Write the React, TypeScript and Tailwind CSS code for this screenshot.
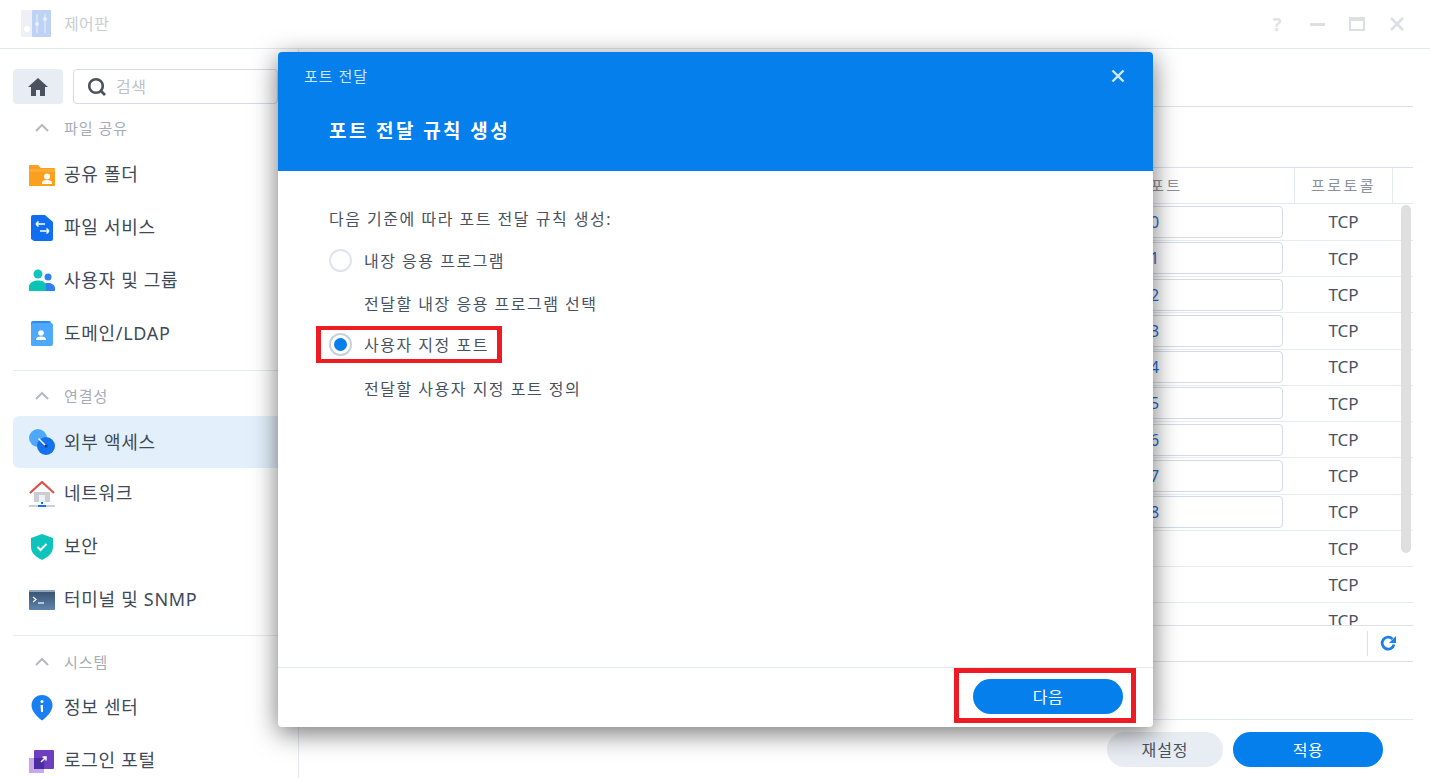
import React from 'react';

const font = "font-['Noto_Sans','Noto_Sans_CJK_KR',sans-serif]";

const FolderIcon = () => (
  <svg width="26" height="24" viewBox="0 0 26 24">
    <path d="M0 3a1 1 0 0 1 1-1h8l3 3h13a1 1 0 0 1 1 1v16a1 1 0 0 1-1 1H1a1 1 0 0 1-1-1z" fill="#fba01e" />
    <path d="M0 6h26v3H0z" fill="#fdb347" opacity="0.6" />
    <circle cx="18" cy="13.5" r="3" fill="#fff" />
    <path d="M13 21v-1.5c0-1.5 2-2.5 5-2.5s5 1 5 2.5V21z" fill="#fff" />
  </svg>
);

const FileIcon = () => (
  <svg width="24" height="26" viewBox="0 0 24 26">
    <path d="M1 2a2 2 0 0 1 2-2h12l8 7v17a2 2 0 0 1-2 2H4l-3-2z" fill="#0f6ff0" />
    <path d="M15 9H6m0 0 2.500-2.500M6 9l2.500 2.500M10 16h9m0 0-2.500-2.500M19 16l-2.500 2.500" stroke="#fff" strokeWidth="1.600" fill="none" />
  </svg>
);

const UsersIcon = () => (
  <svg width="26" height="24" viewBox="0 0 26 24">
    <circle cx="19" cy="8" r="3.500" fill="#2f7ff5" />
    <path d="M13 22v-3c0-3 2.500-5 6-5s7 2 7 5v3z" fill="#2f7ff5" />
    <circle cx="9" cy="5" r="4.500" fill="#12c4bb" />
    <path d="M0 22v-4c0-4 4-6.500 9-6.500s8 2 8 6.500v4z" fill="#0ac3b4" />
  </svg>
);

const DomainIcon = () => (
  <svg width="24" height="26" viewBox="0 0 24 26">
    <rect x="1" y="0" width="20" height="25" rx="2" fill="#2a8cf0" />
    <rect x="1" y="2" width="22" height="23" rx="2" fill="#4fa9fb" />
    <circle cx="11" cy="12" r="2.800" fill="#fff" />
    <path d="M6 18.500c0-2 2-3 5-3s5 1 5 3v.500H6z" fill="#fff" />
  </svg>
);

const ExternalIcon = () => (
  <svg width="26" height="26" viewBox="0 0 26 26">
    <circle cx="9" cy="9" r="9" fill="#4fa9fb" />
    <circle cx="17" cy="17" r="9" fill="#1572ee" />
    <path d="M9.500 9.500 17 17" stroke="#fff" strokeWidth="1.500" />
    <circle cx="17" cy="17" r="1.600" fill="#0d3f96" />
  </svg>
);

const NetworkIcon = () => (
  <svg width="26" height="26" viewBox="0 0 26 26">
    <path d="M5 11h16v10H5z" fill="#c8ced6" />
    <path d="M10 14h6v7h-6z" fill="#eef1f4" />
    <path d="M1 12 13 1l12 11" stroke="#d9534b" strokeWidth="2.200" fill="none" />
    <path d="M13 21v2" stroke="#1572ee" strokeWidth="2" />
    <path d="M0 25h26" stroke="#b9c0c9" strokeWidth="1.500" />
    <path d="M9 25h8" stroke="#1572ee" strokeWidth="2" />
  </svg>
);

const ShieldIcon = () => (
  <svg width="24" height="26" viewBox="0 0 24 26">
    <path d="M12 0 23 4v9c0 6-5 10-11 13C6 23 1 19 1 13V4z" fill="#0cc4bc" />
    <path d="m7.500 13 3 3 6-6" stroke="#fff" strokeWidth="2" fill="none" />
  </svg>
);

const TerminalIcon = () => (
  <svg width="26" height="20" viewBox="0 0 26 20">
    <defs>
      <linearGradient id="term" x1="0" y1="0" x2="0" y2="1">
        <stop offset="0" stopColor="#35506f" />
        <stop offset="1" stopColor="#5f84ab" />
      </linearGradient>
    </defs>
    <rect width="26" height="20" rx="1" fill="url(#term)" />
    <path d="M0 0h26v2H0z" fill="#8da5bf" />
    <path d="m4 7 3 2.500L4 12" stroke="#fff" strokeWidth="1.200" fill="none" />
    <path d="M9 13h6" stroke="#fff" strokeWidth="1.200" />
  </svg>
);

const InfoIcon = () => (
  <svg width="22" height="26" viewBox="0 0 22 26">
    <path d="M11 0c6 0 10.500 4.500 10.500 10.500 0 5-5 11-10.500 15C5.500 21.500.5 15.500.5 10.500.5 4.500 5 0 11 0z" fill="#1a7ff2" />
    <circle cx="11" cy="6.500" r="1.500" fill="#fff" />
    <path d="M9.500 10H12v7h-2" fill="#fff" />
  </svg>
);

const LoginIcon = () => (
  <svg width="26" height="24" viewBox="0 0 26 24">
    <rect x="0" y="9" width="15" height="15" fill="#c9a8ea" />
    <rect x="5" y="1" width="20" height="19" rx="1" fill="#6d3fc0" />
    <path d="M5 9h10v11H5z" fill="#4a2ba5" />
    <path d="m12 13 5-5m-3.500 0H17v3.500" stroke="#fff" strokeWidth="1.500" fill="none" />
  </svg>
);

const sections = [
  {
    title: '파일 공유',
    sectionClass: '',
    titleClass: '-mt-[1px] mb-[7px]',
    items: [
      { label: '공유 폴더', icon: <FolderIcon /> },
      { label: '파일 서비스', icon: <FileIcon /> },
      { label: '사용자 및 그룹', icon: <UsersIcon /> },
      { label: '도메인/LDAP', icon: <DomainIcon /> },
    ],
  },
  {
    title: '연결성',
    sectionClass: 'border-t border-[#e6ebf2] mt-[10px]',
    titleClass: 'mt-[12px] mb-[7px]',
    items: [
      { label: '외부 액세스', icon: <ExternalIcon />, active: true },
      { label: '네트워크', icon: <NetworkIcon /> },
      { label: '보안', icon: <ShieldIcon /> },
      { label: '터미널 및 SNMP', icon: <TerminalIcon /> },
    ],
  },
  {
    title: '시스템',
    sectionClass: 'border-t border-[#e6ebf2] mt-[9px]',
    titleClass: 'mt-[13px] mb-[6px]',
    items: [
      { label: '정보 센터', icon: <InfoIcon /> },
      { label: '로그인 포털', icon: <LoginIcon /> },
    ],
  },
];

const ports = ['0', '1', '2', '3', '4', '5', '6', '7', '8', '', '', ''];

const Sidebar = () => (
  <aside className="w-[299px] shrink-0 border-r border-[#e3e9f0] pl-[13px] overflow-hidden">
    <div className="flex gap-[10px] pt-[20px] h-[67px] shrink-0">
      <div className="w-[50px] h-[35px] rounded bg-[#e8edf3] flex items-center justify-center">
        <svg width="20" height="18" viewBox="0 0 20 18">
          <path d="M10 0 0 9h3v9h5v-6h4v6h5V9h3z" fill="#49525e" />
        </svg>
      </div>
      <div className="w-[205px] h-[35px] rounded border border-[#d3dce6] flex items-center pl-[13px] gap-[9px]">
        <svg width="20" height="20" viewBox="0 0 20 20">
          <circle cx="9" cy="9" r="6.800" stroke="#49525e" strokeWidth="2.600" fill="none" />
          <path d="m14 14 4 4" stroke="#49525e" strokeWidth="2.600" />
        </svg>
        <span className="text-[16px] tracking-[0.6px] text-[#bcc2ca]">검색</span>
      </div>
    </div>
    {sections.map((s) => (
      <div key={s.title} className={s.sectionClass}>
        <div className={`flex items-center h-[26px] text-[15px] tracking-[1px] text-[#a6acb5] ${s.titleClass}`}>
          <svg width="16" height="10" viewBox="0 0 16 10" className="ml-[21px] mr-[14px]">
            <path d="m2 8 6-6 6 6" stroke="#b4bac2" strokeWidth="2" fill="none" />
          </svg>
          {s.title}
        </div>
        {s.items.map((it: { label: string; icon: React.ReactNode; active?: boolean }) => (
          <div
            key={it.label}
            className={`flex items-center text-[18px] tracking-[0.7px] text-[#3f4a58] rounded-l-md ${it.active ? 'bg-[#e3f0fc] h-[52px] -mb-[1px]' : 'h-[53px]'}`}
          >
            <div className="w-[51px] flex justify-center pl-[16px] pr-[9px] shrink-0">{it.icon}</div>
            {it.label}
          </div>
        ))}
      </div>
    ))}
  </aside>
);

const MainPanel = () => (
  <main className="flex-1 min-w-0 pr-[17px] flex flex-col relative">
    <div className="h-[58px] border-b border-[#d9e2ec] shrink-0" />
    <div className="h-[61px] border-b border-[#d9e2ec] shrink-0" />
    <div className="h-[36px] border-b border-[#e3e9f0] shrink-0 flex text-[15px] tracking-[2.500px] text-[#8b929c]">
      <div className="flex-1 flex items-center pl-[851px]">포트</div>
      <div className="w-[99px] border-x border-[#e3e9f0] flex items-center justify-center">프로토콜</div>
      <div className="w-[20px]" />
    </div>
    <div className="h-[422px] shrink-0 overflow-hidden border-b border-[#d9e2ec] relative pt-[0.6px]">
      {ports.map((p, i) => (
        <div key={i} className="h-[36.250px] border-b border-[#e6ebf2] flex items-center">
          <div className="flex-1 pl-[830px] pr-[11px]">
            {p && (
              <div className="h-[32px] rounded border border-[#d3dce6] flex items-center pl-[20px] text-[16px] text-[#1a6fd8]">
                {p}
              </div>
            )}
          </div>
          <div className="w-[99px] text-center text-[17px] text-[#48525f]">TCP</div>
          <div className="w-[20px]" />
        </div>
      ))}
      <div className="absolute right-[2px] top-[1px] w-[10px] h-[348px] rounded-full bg-[#dfdfdf]" />
    </div>
    <div className="h-[36px] border-b border-[#d9e2ec] shrink-0 flex items-center justify-end pr-[16px]">
      <div className="h-[25px] border-l border-[#d9e2ec] pl-[12px] flex items-center">
        <svg width="17" height="17" viewBox="0 0 17 17">
          <path d="M14 9.500A6 6 0 1 1 12.500 4" stroke="#1a7fe8" strokeWidth="2.800" fill="none" />
          <path d="M16 1v7h-7z" fill="#1a7fe8" />
        </svg>
      </div>
    </div>
    <div className="h-[58px] border-b border-[#e3e9f0] shrink-0" />
    <div className="flex justify-end gap-[10px] pt-[12px] pr-[30px]">
      <button className="w-[116px] h-[35px] rounded-full bg-[#e8edf3] text-[16px] tracking-[1px] text-[#48525f]">재설정</button>
      <button className="w-[150px] h-[35px] rounded-full bg-[#057feb] text-[16px] tracking-[0.6px] text-white">적용</button>
    </div>
  </main>
);

const Dialog = () => (
  <div className="absolute left-[278px] top-[52px] w-[875px] h-[675px] bg-white rounded shadow-[0_6px_26px_rgba(0,0,0,0.55)] flex flex-col overflow-hidden">
    <div className="h-[119px] shrink-0 bg-[#057feb] pl-[26px] pr-[28px] text-white">
      <div className="h-[48px] flex items-center justify-between">
        <span className="text-[15px] tracking-[1px] text-[#cfe5fb]">포트 전달</span>
        <svg width="14" height="14" viewBox="0 0 14 14">
          <path d="m1.500 1.500 11 11m0-11-11 11" stroke="#d4e8fc" strokeWidth="2.400" />
        </svg>
      </div>
      <div className="pl-[25px] pt-[17px] text-[19px] font-bold tracking-[2.400px]">포트 전달 규칙 생성</div>
    </div>
    <div className="flex-1 pl-[51px] pt-[37px] text-[16px] tracking-[1.500px] text-[#48525f]">
      <div className="h-[22px] flex items-center">다음 기준에 따라 포트 전달 규칙 생성:</div>
      <div className="mt-[19px] h-[23px] flex items-center gap-[12px]">
        <span className="w-[23px] h-[23px] rounded-full border-2 border-[#dfe5ec]" />
        내장 응용 프로그램
      </div>
      <div className="mt-[21px] h-[22px] flex items-center pl-[35px]">전달할 내장 응용 프로그램 선택</div>
      <div className="-ml-[13px] mt-[11px] w-[186px] h-[37px] border-x-[5px] border-y-[4px] border-[#ed1c24] flex items-center gap-[12px] pl-[8px]">
        <span className="w-[23px] h-[23px] rounded-full border-2 border-[#c8d0da] flex items-center justify-center">
          <span className="w-[13px] h-[13px] rounded-full bg-[#057feb]" />
        </span>
        사용자 지정 포트
      </div>
      <div className="mt-[15px] h-[22px] flex items-center pl-[35px]">전달할 사용자 지정 포트 정의</div>
    </div>
    <div className="h-[60px] shrink-0 border-t border-[#e3e9f0] flex justify-end pr-[17px] items-start">
      <div className="w-[182px] h-[55px] border-[5px] border-[#ed1c24] flex items-center justify-end pr-[8px] pt-[2px]">
        <button className="w-[150px] h-[35px] rounded-full bg-[#057feb] text-[16px] tracking-[0.6px] text-white">다음</button>
      </div>
    </div>
  </div>
);

export default function App() {
  return (
    <div className={`relative w-[1430px] h-[778px] overflow-hidden bg-white flex flex-col ${font}`}>
      <header className="h-[49px] shrink-0 border-b border-[#e3e9f0] flex items-center pl-[21px] pr-[13px]">
        <svg width="30" height="28" viewBox="0 0 30 28" className="opacity-50">
          <rect x="0" y="0" width="12" height="27" rx="1" fill="#dfe2ee" />
          <rect x="11" y="0" width="19" height="27" rx="1" fill="#7ea6ec" />
          <circle cx="6" cy="19" r="3" fill="#fff" />
          <path d="M16 4v19M24 4v19" stroke="#b9cff5" strokeWidth="1.500" />
          <circle cx="16" cy="14" r="2" fill="#cfe0fa" />
          <circle cx="24" cy="9" r="2" fill="#cfe0fa" />
        </svg>
        <span className="ml-[13px] text-[16px] tracking-[0.4px] text-[#c9cdd2]">제어판</span>
        <div className="ml-auto flex items-center">
          <span className="w-[40px] text-center text-[18px] font-bold text-[#dfe2e5]">?</span>
          <span className="w-[40px] flex justify-center">
            <svg width="15" height="3" viewBox="0 0 15 3"><path d="M0 0h15v3H0z" fill="#dcdfe3" /></svg>
          </span>
          <span className="w-[40px] flex justify-center">
            <svg width="16" height="14" viewBox="0 0 16 14">
              <rect x="1" y="1" width="14" height="12" fill="none" stroke="#dcdfe3" strokeWidth="2" />
              <path d="M0 0h16v4H0z" fill="#dcdfe3" />
            </svg>
          </span>
          <span className="w-[40px] flex justify-center">
            <svg width="14" height="14" viewBox="0 0 14 14">
              <path d="m1 1 12 12m0-12L1 13" stroke="#dcdfe3" strokeWidth="2.500" />
            </svg>
          </span>
        </div>
      </header>
      <div className="flex flex-1 min-h-0">
        <Sidebar />
        <MainPanel />
      </div>
      <Dialog />
    </div>
  );
}
